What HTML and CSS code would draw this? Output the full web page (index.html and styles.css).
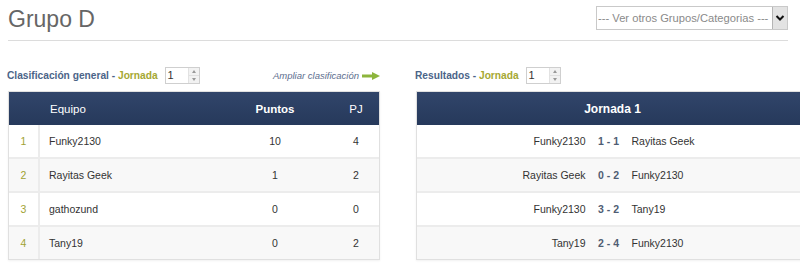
FILE: index.html
```html
<!DOCTYPE html>
<html lang="es">
<head>
<meta charset="utf-8">
<title>Grupo D</title>
<link rel="stylesheet" href="styles.css">
</head>
<body>
<div class="page">
  <header class="top">
    <h1 class="title">Grupo D</h1>
    <div class="select">
      <span class="select-text">--- Ver otros Grupos/Categorias ---</span>
      <span class="select-btn"><svg width="10" height="8" viewBox="0 0 10 8"><path d="M1.5 2 L5 5.5 L8.5 2" fill="none" stroke="#111" stroke-width="2"/></svg></span>
    </div>
  </header>

  <main class="cols">
    <section class="col col-left">
      <div class="bar">
        <div class="bar-label">
          <span class="lbl-blue">Clasificación general - </span><span class="lbl-olive">Jornada</span>
          <span class="spin"><span class="spin-val">1</span><span class="spin-btns"><span class="up"></span><span class="down"></span></span></span>
        </div>
        <a class="more">Ampliar clasificación <svg width="18" height="8" viewBox="0 0 18 8"><rect x="0" y="2.5" width="11" height="3" fill="#8db53c"/><path d="M10 0 L18 4 L10 8 Z" fill="#8db53c"/></svg></a>
      </div>
      <div class="table">
        <div class="row head">
          <div class="c-rank"></div>
          <div class="c-team">Equipo</div>
          <div class="c-pts strong">Puntos</div>
          <div class="c-pj">PJ</div>
        </div>
        <div class="row">
          <div class="c-rank rank">1</div>
          <div class="c-team">Funky2130</div>
          <div class="c-pts">10</div>
          <div class="c-pj">4</div>
        </div>
        <div class="row alt">
          <div class="c-rank rank">2</div>
          <div class="c-team">Rayitas Geek</div>
          <div class="c-pts">1</div>
          <div class="c-pj">2</div>
        </div>
        <div class="row">
          <div class="c-rank rank">3</div>
          <div class="c-team">gathozund</div>
          <div class="c-pts">0</div>
          <div class="c-pj">0</div>
        </div>
        <div class="row alt last">
          <div class="c-rank rank">4</div>
          <div class="c-team">Tany19</div>
          <div class="c-pts">0</div>
          <div class="c-pj">2</div>
        </div>
      </div>
    </section>

    <section class="col col-right">
      <div class="bar">
        <div class="bar-label">
          <span class="lbl-blue">Resultados - </span><span class="lbl-olive">Jornada</span>
          <span class="spin"><span class="spin-val">1</span><span class="spin-btns"><span class="up"></span><span class="down"></span></span></span>
        </div>
      </div>
      <div class="table results">
        <div class="rhead">Jornada 1</div>
        <div class="match">
          <div class="home">Funky2130</div><div class="score">1 - 1</div><div class="away">Rayitas Geek</div>
        </div>
        <div class="match alt">
          <div class="home">Rayitas Geek</div><div class="score">0 - 2</div><div class="away">Funky2130</div>
        </div>
        <div class="match">
          <div class="home">Funky2130</div><div class="score">3 - 2</div><div class="away">Tany19</div>
        </div>
        <div class="match alt last">
          <div class="home">Tany19</div><div class="score">2 - 4</div><div class="away">Funky2130</div>
        </div>
      </div>
    </section>
  </main>
</div>
</body>
</html>
```

FILE: styles.css
```css
* { box-sizing: border-box; }
html, body { margin: 0; padding: 0; background: #fff; overflow: hidden; }
body {
  font-family: "Liberation Sans", Arial, sans-serif;
  color: #333;
  width: 800px;
  height: 265px;
}
.page { padding: 0 0 0 8px; width: 820px; }

.top {
  width: 780px;
  height: 41px;
  border-bottom: 1px solid #dcdcdc;
  display: flex;
  justify-content: space-between;
  align-items: flex-start;
  padding-top: 6px;
}
.title {
  margin: 0;
  font-weight: normal;
  font-size: 23px;
  line-height: 26px;
  color: #666;
}
.select {
  display: flex;
  height: 24px;
  width: 192px;
  border: 1px solid #c9c9c9;
  background: #fff;
}
.select-text {
  flex: 1;
  font-size: 11.2px;
  color: #8a8a8a;
  line-height: 22px;
  padding-left: 1px;
  white-space: nowrap;
}
.select-btn {
  width: 15px;
  flex: none;
  background: #e3e3e3;
  border-left: 1px solid #b5b5b5;
  display: flex;
  align-items: center;
  justify-content: center;
}

.cols {
  display: flex;
  gap: 36px;
  margin-top: 26px;
}
.col-left { width: 372px; flex: none; }
.col-right { width: 400px; flex: none; }

.bar {
  height: 17px;
  margin-bottom: 7px;
  display: flex;
  align-items: center;
  justify-content: space-between;
}
.bar-label {
  display: flex;
  align-items: center;
  font-size: 10.2px;
  font-weight: bold;
  margin-left: -1px;
}
.lbl-blue { color: #4b6488; white-space: pre; }
.lbl-olive { color: #a6a832; }
.spin {
  margin-left: 7px;
  width: 35px;
  height: 17px;
  border: 1px solid #cfcfcf;
  display: flex;
  background: #fff;
}
.spin-val {
  flex: 1;
  font-weight: normal;
  color: #333;
  font-size: 11px;
  line-height: 15px;
  padding-left: 2px;
}
.spin-btns {
  width: 11px;
  display: flex;
  flex-direction: column;
  border-left: 1px solid #e2e2e2;
  background: #f2f2f2;
}
.spin-btns span {
  flex: 1;
  display: flex;
  align-items: center;
  justify-content: center;
}
.spin-btns .up { border-bottom: 1px solid #e0e0e0; }
.spin-btns .up::after {
  content: "";
  border-left: 2px solid transparent;
  border-right: 2px solid transparent;
  border-bottom: 3px solid #999;
}
.spin-btns .down::after {
  content: "";
  border-left: 2px solid transparent;
  border-right: 2px solid transparent;
  border-top: 3px solid #999;
}
.more {
  font-size: 9.5px;
  font-style: italic;
  color: #5d6e8e;
  display: flex;
  align-items: center;
  gap: 3px;
}

.table {
  border: 1px solid #e0e0e0;
  box-shadow: 0 1px 2px rgba(0,0,0,0.06);
  background: #fff;
}
.row {
  display: grid;
  grid-template-columns: 31px 185px 100px 1fr;
  height: 34px;
  align-items: center;
  font-size: 10.5px;
  border-bottom: 2px solid #ececec;
}
.row.last { border-bottom: none; height: 32px; }
.row > div { height: 100%; display: flex; align-items: center; }
.row.alt { background: #f8f8f8; }
.row .c-rank { justify-content: center; border-right: 2px solid #ececec; }
.row .c-team { padding-left: 9px; }
.row .c-pts, .row .c-pj { justify-content: center; }
.row .c-pj { padding-left: 8px; }
.rank { color: #9fa233; }
.row.head {
  height: 33px;
  border-bottom: none;
  background: linear-gradient(#31456a, #26395b);
  color: #fff;
  font-size: 11.5px;
}
.row.head .c-rank { border-right: none; }
.row.head .c-team { padding-left: 10px; }
.strong { font-weight: bold; }

.rhead {
  height: 33px;
  background: linear-gradient(#31456a, #26395b);
  color: #fff;
  font-weight: bold;
  font-size: 12px;
  display: flex;
  align-items: center;
  justify-content: center;
  padding-right: 8px;
}
.results { border-right: none; }
.match {
  display: grid;
  grid-template-columns: 1fr 46px 1fr;
  height: 34px;
  align-items: center;
  font-size: 10.5px;
  border-bottom: 2px solid #ececec;
  padding-right: 16px;
}
.match.last { border-bottom: none; height: 32px; }
.match.alt { background: #f8f8f8; }
.home { text-align: right; }
.score { text-align: center; font-weight: bold; color: #4f5d73; }
.away { text-align: left; }
```
